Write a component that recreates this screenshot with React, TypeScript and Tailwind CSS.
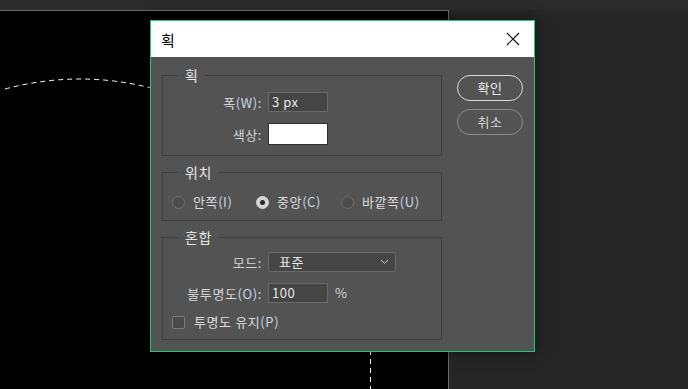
const font = { fontFamily: '"Noto Sans CJK KR", "Noto Sans", sans-serif' };

const Mn = ({ children }: { children: string }) => (
    <span className="text-[#c9d6e6]">{children}</span>
);

const Group = ({ title, className, children }: { title: string; className: string; children: React.ReactNode }) => (
    <div className={`relative border border-[#3f3f3f] ${className}`}>
        <span className="absolute -top-[11px] left-[15px] bg-[#535353] px-[7px] text-[14px] leading-[20px] tracking-[0.5px] text-[#e6e6e6]">
            {title}
        </span>
        {children}
    </div>
);

const Radio = ({ label, mn, checked, width }: { label: string; mn: string; checked?: boolean; width: string }) => (
    <div className={`flex items-center gap-[8px] ${width}`}>
        <span
            className={`flex h-[13px] w-[13px] items-center justify-center rounded-full border ${
                checked ? "border-[#d6d6d6] bg-[#d6d6d6]" : "border-[#6e6e6e] bg-[#4c4c4c]"
            }`}
        >
            {checked && <span className="h-[5px] w-[5px] rounded-full bg-[#2a2a2a]" />}
        </span>
        <span className="text-[13px] leading-[16px] tracking-[0.6px] text-[#dcdcdc]">
            {label}
            <Mn>{mn}</Mn>
        </span>
    </div>
);

export default function App() {
    return (
        <div className="relative h-[389px] w-[688px] overflow-hidden bg-[#262626]" style={font}>
            <div className="h-[10px] bg-[#2b2b2b]" />
            <div className="relative h-[379px] w-[449px] border-t border-r border-[#6b6b6b] bg-black">
                <svg className="absolute left-0 top-0" width="449" height="379">
                    <path
                        d="M5 78 Q80 58 155 78"
                        fill="none"
                        stroke="#fff"
                        strokeWidth="1"
                        strokeDasharray="5 4"
                    />
                    <path d="M370.5 330 L370.5 379" stroke="#fff" strokeWidth="1" strokeDasharray="5 4" />
                </svg>
            </div>

            {/* dialog */}
            <div className="absolute left-[150px] top-[20px] flex h-[332px] w-[385px] flex-col border border-[#1fc978] bg-[#535353] shadow-[0_0_14px_rgba(0,0,0,0.55)]">
                <div className="flex h-[36px] shrink-0 items-center justify-between bg-white pl-[10px] pr-[14px]">
                    <span className="text-[15px] leading-none text-black">획</span>
                    <svg width="14" height="14" viewBox="0 0 14 14">
                        <path d="M1 1 L13 13 M13 1 L1 13" stroke="#111" strokeWidth="1.2" />
                    </svg>
                </div>

                <div className="flex pl-[11px] pt-[18px]">
                    <div className="w-[280px]">
                        <Group title="획" className="h-[81px] pt-[16px]">
                            <div className="flex items-center gap-[6px]">
                                <span className="w-[99px] text-right text-[13px] leading-none tracking-[0.6px] text-[#d4d4d4]">
                                    폭<Mn>(W)</Mn>:
                                </span>
                                <div className="flex h-[20px] w-[60px] items-center border border-[#6a6a6a] bg-[#454545] pl-[3px] text-[13px] tracking-[0.5px] text-[#e8e8e8]">
                                    3 px
                                </div>
                            </div>
                            <div className="mt-[11px] flex items-center gap-[6px]">
                                <span className="w-[99px] text-right text-[13px] leading-none tracking-[0.6px] text-[#d4d4d4]">색상:</span>
                                <div className="h-[22px] w-[60px] border border-[#2e2e2e] bg-white" />
                            </div>
                        </Group>

                        <Group title="위치" className="mt-[16px] flex h-[49px] items-start pl-[9px] pt-[21px]">
                            <Radio label="안쪽" mn="(I)" width="w-[84px]" />
                            <Radio label="중앙" mn="(C)" checked width="w-[85px]" />
                            <Radio label="바깥쪽" mn="(U)" width="w-[90px]" />
                        </Group>

                        <Group title="혼합" className="mt-[16px] h-[103px] pt-[14px]">
                            <div className="flex items-center gap-[6px]">
                                <span className="w-[99px] text-right text-[13px] leading-none tracking-[0.6px] text-[#d4d4d4]">모드:</span>
                                <div className="flex h-[20px] w-[128px] items-center justify-between rounded-[3px] border border-[#6a6a6a] bg-[#464646] pl-[10px] pr-[6px] text-[13px] tracking-[0.6px] text-[#e8e8e8]">
                                    <span>표준</span>
                                    <svg width="9" height="6" viewBox="0 0 9 6">
                                        <path d="M1 1 L4.5 4.5 L8 1" fill="none" stroke="#cfcfcf" strokeWidth="1" />
                                    </svg>
                                </div>
                            </div>
                            <div className="mt-[11px] flex items-center gap-[6px]">
                                <span className="w-[99px] text-right text-[13px] leading-none tracking-[0.6px] text-[#d4d4d4]">
                                    불투명도<Mn>(O)</Mn>:
                                </span>
                                <div className="flex h-[20px] w-[60px] items-center border border-[#6a6a6a] bg-[#454545] pl-[3px] text-[13px] tracking-[0.5px] text-[#e8e8e8]">
                                    100
                                </div>
                                <span className="ml-[1px] text-[13px] text-[#d4d4d4]">%</span>
                            </div>
                            <div className="mt-[11px] flex items-center gap-[9px] pl-[9px]">
                                <span className="h-[13px] w-[13px] rounded-[2px] border border-[#7a7a7a] bg-[#4a4a4a]" />
                                <span className="text-[13px] leading-[16px] tracking-[0.6px] text-[#dcdcdc]">
                                    투명도 유지<Mn>(P)</Mn>
                                </span>
                            </div>
                        </Group>
                    </div>

                    <div className="ml-[15px] flex flex-col gap-[8px]">
                        <button className="h-[26px] w-[66px] rounded-full border-[1.5px] border-[#dadada] text-[13px] tracking-[0.6px] text-[#ececec]">
                            확인
                        </button>
                        <button className="h-[26px] w-[66px] rounded-full border border-[#8a8a8a] text-[13px] tracking-[0.6px] text-[#d6d6d6]">
                            취소
                        </button>
                    </div>
                </div>
            </div>
        </div>
    );
}
